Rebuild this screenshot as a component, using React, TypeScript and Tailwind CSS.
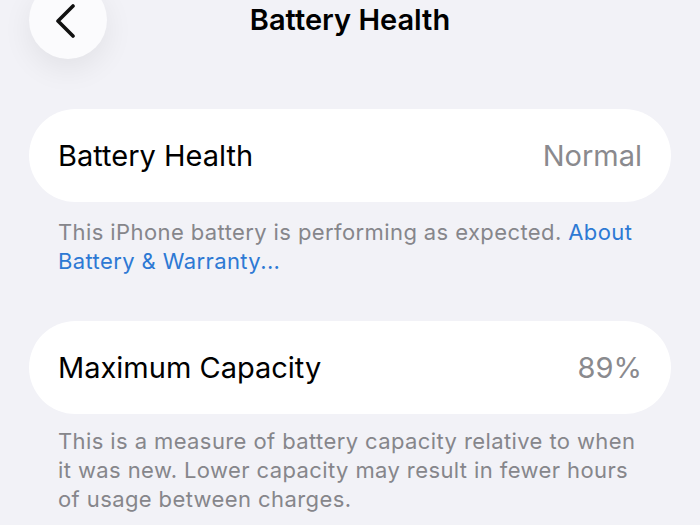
import { ReactNode } from 'react'

function Row({ label, value }: { label: string; value: string }) {
  return (
    <div className="mx-[29px] flex h-[93px] items-center justify-between rounded-full bg-white px-[29px]">
      <span className="text-[29px] text-black">{label}</span>
      <span className="text-[29px] text-[#8a8a8e]">{value}</span>
    </div>
  )
}

function Footnote({ className, children }: { className: string; children: ReactNode }) {
  return (
    <p className={`mx-[58px] text-[22px] leading-[29px] tracking-[0.4px] text-[#86868b] ${className}`}>
      {children}
    </p>
  )
}

export default function App() {
  return (
    <div
      className="h-[525px] w-[700px] overflow-hidden bg-[#f2f2f7]"
      style={{ fontFamily: 'Inter, "Noto Sans", sans-serif' }}
    >
      <header className="mt-[-19px] grid h-[78px] grid-cols-[1fr_auto_1fr] items-center">
        <div className="pl-[29px]">
          <button className="flex h-[78px] w-[78px] items-center justify-center rounded-full bg-[#fbfbfd] shadow-[0_10px_30px_rgba(0,0,0,0.07)]">
            <svg width="22" height="34" viewBox="0 0 22 34" fill="none" className="ml-[-5px] mt-[2px]">
              <path
                d="M18 2 L3 17 L18 32"
                stroke="#111"
                strokeWidth="3.6"
                strokeLinecap="round"
                strokeLinejoin="round"
              />
            </svg>
          </button>
        </div>
        <h1 className="text-[29px] font-semibold text-black">Battery Health</h1>
        <div />
      </header>

      <div className="mt-[50px]">
        <Row label="Battery Health" value="Normal" />
        <Footnote className="mt-[16px]">
          This iPhone battery is performing as expected.{' '}
          <span className="text-[#2d79d4]">About Battery &amp; Warranty...</span>
        </Footnote>
      </div>

      <div className="mt-[45px]">
        <Row label="Maximum Capacity" value="89%" />
        <Footnote className="mt-[13px]">
          This is a measure of battery capacity relative to when it was new. Lower capacity may
          result in fewer hours of usage between charges.
        </Footnote>
      </div>
    </div>
  )
}
